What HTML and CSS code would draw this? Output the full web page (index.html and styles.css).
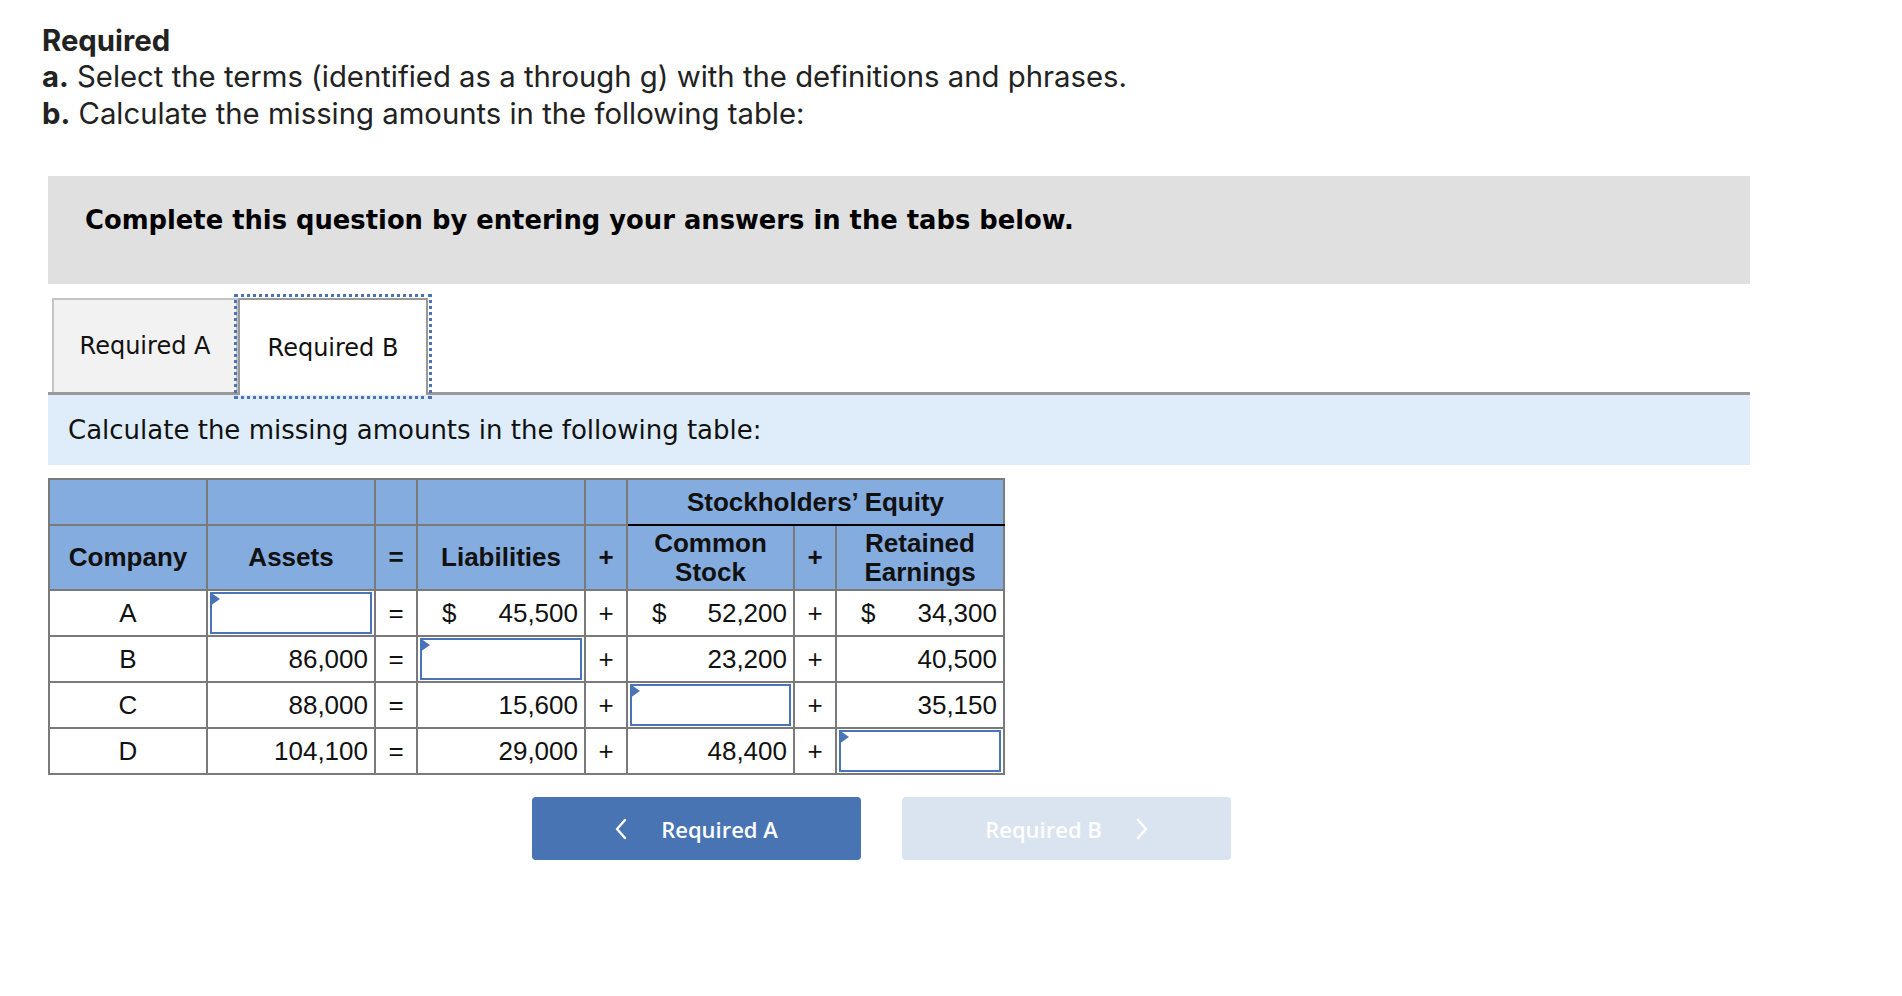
FILE: index.html
```html
<!DOCTYPE html>
<html lang="en">
<head>
<meta charset="utf-8">
<title>Required</title>
<link rel="stylesheet" href="styles.css">
</head>
<body>
<div class="page">
  <div class="intro">
    <div class="req">Required</div>
    <div><b>a.</b> Select the terms (identified as a through g) with the definitions and phrases.</div>
    <div><b>b.</b> Calculate the missing amounts in the following table:</div>
  </div>
  <div class="main">
    <div class="prompt">Complete this question by entering your answers in the tabs below.</div>
    <div class="tabs">
      <div class="tab">Required A</div>
      <div class="tab active">Required B</div>
    </div>
    <div class="band">Calculate the missing amounts in the following table:</div>
    <table class="eq">
      <colgroup>
        <col class="c-company"><col class="c-num"><col class="c-op"><col class="c-num"><col class="c-op"><col class="c-num3"><col class="c-op"><col class="c-num">
      </colgroup>
      <thead>
        <tr class="h1">
          <th></th><th></th><th></th><th></th><th></th>
          <th colspan="3" class="se">Stockholders’ Equity</th>
        </tr>
        <tr class="h2">
          <th>Company</th><th>Assets</th><th>=</th><th>Liabilities</th><th>+</th>
          <th>Common<br>Stock</th><th>+</th><th>Retained<br>Earnings</th>
        </tr>
      </thead>
      <tbody>
        <tr>
          <td class="co">A</td>
          <td class="in"><div class="box"></div></td>
          <td class="op">=</td>
          <td class="num"><span class="cur">$</span>45,500</td>
          <td class="op">+</td>
          <td class="num"><span class="cur">$</span>52,200</td>
          <td class="op">+</td>
          <td class="num"><span class="cur">$</span>34,300</td>
        </tr>
        <tr>
          <td class="co">B</td>
          <td class="num">86,000</td>
          <td class="op">=</td>
          <td class="in"><div class="box"></div></td>
          <td class="op">+</td>
          <td class="num">23,200</td>
          <td class="op">+</td>
          <td class="num">40,500</td>
        </tr>
        <tr>
          <td class="co">C</td>
          <td class="num">88,000</td>
          <td class="op">=</td>
          <td class="num">15,600</td>
          <td class="op">+</td>
          <td class="in"><div class="box"></div></td>
          <td class="op">+</td>
          <td class="num">35,150</td>
        </tr>
        <tr>
          <td class="co">D</td>
          <td class="num">104,100</td>
          <td class="op">=</td>
          <td class="num">29,000</td>
          <td class="op">+</td>
          <td class="num">48,400</td>
          <td class="op">+</td>
          <td class="in"><div class="box"></div></td>
        </tr>
      </tbody>
    </table>
    <div class="nav">
      <div class="btn prev">
        <svg class="chev" width="12" height="22" viewBox="0 0 12 22"><path d="M10 2 L2 11 L10 20" fill="none" stroke="#fff" stroke-width="2.4" stroke-linecap="round" stroke-linejoin="round"/></svg>
        <span>Required A</span>
      </div>
      <div class="btn next">
        <span>Required B</span>
        <svg class="chev" width="12" height="22" viewBox="0 0 12 22"><path d="M2 2 L10 11 L2 20" fill="none" stroke="#fff" stroke-width="2.4" stroke-linecap="round" stroke-linejoin="round"/></svg>
      </div>
    </div>
  </div>
</div>
</body>
</html>
```

FILE: styles.css
```css
html, body {
  margin: 0;
  padding: 0;
  background: #fff;
}

.page {
  font-family: "Open Sans", Lato, sans-serif;
  color: #222;
}

.intro {
  padding: 23px 0 0 42px;
  font-family: Inter, "Open Sans", sans-serif;
  font-size: 29.3px;
  line-height: 36.4px;
}

.intro .req {
  font-weight: bold;
}

.main {
  margin: 44px 0 0 48px;
  width: 1702px;
}

.prompt {
  background: #e0e0e0;
  height: 108px;
  box-sizing: border-box;
  padding: 29px 0 0 37px;
  font-family: "DejaVu Sans", Verdana, sans-serif;
  font-weight: bold;
  font-size: 25.8px;
  line-height: 30px;
  color: #000;
}

.tabs {
  margin-top: 10px;
  padding: 4px 0 0 4px;
  display: flex;
  align-items: flex-start;
  border-bottom: 3px solid #999;
  height: 94px;
}

.tab {
  box-sizing: border-box;
  width: 186px;
  height: 94px;
  display: flex;
  align-items: center;
  justify-content: center;
  font-family: "DejaVu Sans", Verdana, sans-serif;
  font-size: 24px;
  color: #111;
  background: #f2f2f2;
  border: 2px solid #c4c4c4;
  border-bottom: none;
}

.tab.active {
  width: 190px;
  height: 97px;
  margin-bottom: -3px;
  background: #fff;
  border: 2px solid #999;
  border-bottom: none;
  outline: 3px dotted #4a74b5;
  outline-offset: 1px;
}

.band {
  height: 70px;
  background: #deedf9;
  display: flex;
  align-items: center;
  padding-left: 20px;
  font-family: "DejaVu Sans", Verdana, sans-serif;
  font-size: 26px;
  color: #111;
}

.eq {
  margin-top: 13px;
  border-collapse: collapse;
  font-family: "Liberation Sans", Arial, sans-serif;
  font-size: 26px;
  color: #111;
  table-layout: fixed;
  width: 955px;
}

.c-company { width: 158px; }
.c-num { width: 168px; }
.c-num3 { width: 167px; }
.c-op { width: 42px; }

.eq th, .eq td {
  border: 2px solid #7a7a7a;
  padding: 0;
}

.eq thead th {
  background: #84acde;
  font-weight: bold;
  text-align: center;
  line-height: 29px;
}

.eq .h1 th {
  height: 44px;
}

.eq .h2 th {
  height: 63px;
}

.eq .h1 th.se {
  border-bottom: 2px solid #000;
}

.eq tbody td {
  height: 42px;
  line-height: 29px;
}

.eq td.co, .eq td.op {
  text-align: center;
}

.eq td.num {
  text-align: right;
  padding-right: 6px;
}

.cur {
  float: left;
  padding-left: 24px;
}

.eq td.in {
  padding: 1px 2px;
}

.box {
  position: relative;
  box-sizing: border-box;
  height: 42px;
  border: 2px solid #4a74b5;
  background: #fff;
}

.box::before {
  content: "";
  position: absolute;
  left: -2px;
  top: -2px;
  border-left: 10px solid #4a74b5;
  border-top: 7px solid transparent;
  border-bottom: 7px solid transparent;
}

.nav {
  margin-top: 22px;
  padding-left: 484px;
  display: flex;
  gap: 41px;
}

.btn {
  width: 329px;
  height: 63px;
  border-radius: 4px;
  display: flex;
  align-items: center;
  justify-content: center;
  gap: 34px;
  font-family: "Open Sans", Lato, sans-serif;
  font-weight: 600;
  font-size: 22px;
  color: #fff;
}

.btn.prev {
  background: #4874b4;
}

.btn.next {
  background: #dae4f0;
}
```
